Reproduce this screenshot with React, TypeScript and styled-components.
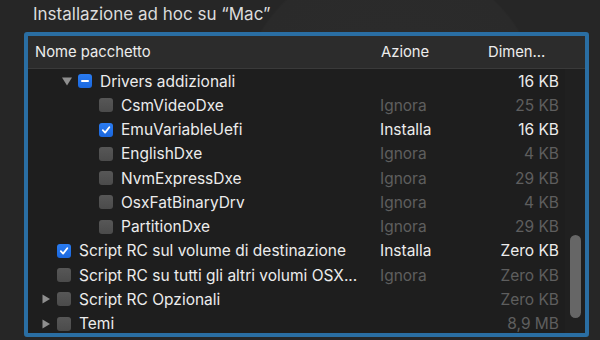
import styled, { createGlobalStyle, css } from 'styled-components';

const GlobalStyle = createGlobalStyle`
    html, body {
        margin: 0;
        padding: 0;
        width: 600px;
        height: 340px;
        overflow: hidden;
        background: #272727;
        font-family: Inter, "Liberation Sans", sans-serif;
        -webkit-font-smoothing: antialiased;
    }
`;

const Window = styled.div`
    width: 600px;
    height: 340px;
    box-sizing: border-box;
    padding: 3px 0 0 24px;
    background: radial-gradient(circle at 390px 110px, #2c2c2c 0, #2a2a2a 150px, #262626 152px, #262626 100%);
`;

const Title = styled.div`
    font-size: 17px;
    line-height: 22px;
    color: #dcdcdc;
    padding-left: 9px;
    margin-bottom: 7px;
`;

const Frame = styled.div`
    width: 565px;
    height: 305px;
    box-sizing: border-box;
    border: 4px solid #2a6ea3;
    border-radius: 3px;
    background: #1e1e1e;
    display: flex;
    flex-direction: column;
    overflow: hidden;
`;

const COLS = '347px 100px 90px 1fr';

const Header = styled.div`
    display: grid;
    grid-template-columns: ${COLS};
    height: 32px;
    flex: none;
    background: #2c2c2c;
    border-bottom: 1px solid #3a3a3a;
`;

const HeadCell = styled.div<{ $pad?: number }>`
    display: flex;
    align-items: center;
    padding-left: ${({ $pad }) => $pad ?? 7}px;
    font-size: 14.8px;
    color: #ececec;
    position: relative;
    & + &::before {
        content: '';
        position: absolute;
        left: 0;
        top: 4px;
        bottom: 5px;
        width: 1px;
        background: #3e3e3e;
    }
`;

const Body = styled.div`
    display: flex;
    flex: 1;
    min-height: 0;
`;

const List = styled.div`
    width: 537px;
    flex: none;
`;

const Track = styled.div`
    flex: 1;
    background: #202020;
    padding: 166px 0 0 5px;
`;

const Thumb = styled.div`
    width: 11px;
    height: 83px;
    border-radius: 6px;
    background: #666666;
`;

const Row = styled.div`
    display: grid;
    grid-template-columns: 347px 100px 90px;
    height: 24.25px;
    align-items: center;
    font-size: 15.5px;
    white-space: nowrap;
`;

const NameCell = styled.div<{ $level: number }>`
    display: flex;
    align-items: center;
    min-width: 0;
    padding-left: ${({ $level }) => 11 + $level * 21}px;
    padding-right: 14px;
    color: #ececec;
`;

const Disclosure = styled.div`
    width: 14px;
    height: 14px;
    margin-right: 4px;
    display: flex;
    align-items: center;
    justify-content: center;
    flex: none;
`;

const Box = styled.div<{ $on?: boolean }>`
    width: 14px;
    height: 14px;
    border-radius: 3px;
    flex: none;
    display: flex;
    align-items: center;
    justify-content: center;
    margin-right: 8px;
    background: linear-gradient(#575757, #4b4b4b);
    ${({ $on }) => $on && css`
        background: linear-gradient(#2a7cf2, #1a67de);
    `}
`;

const ActionCell = styled.div<{ $dim?: boolean }>`
    padding-left: 5px;
    color: ${({ $dim }) => ($dim ? '#5e5e5e' : '#ececec')};
`;

const SizeCell = styled.div<{ $dim?: boolean }>`
    text-align: right;
    padding-right: 6px;
    color: ${({ $dim }) => ($dim ? '#5e5e5e' : '#ececec')};
`;

type Item = {
    name: string;
    level: number;
    check: 'on' | 'off' | 'mixed';
    tri?: 'down' | 'right';
    action?: string;
    size: string;
    dim?: boolean;
};

// names as shown in the column (the long one is already truncated)
const items: Item[] = [
    { name: 'Drivers addizionali', level: 1, check: 'mixed', tri: 'down', size: '16 KB' },
    { name: 'CsmVideoDxe', level: 2, check: 'off', action: 'Ignora', size: '25 KB', dim: true },
    { name: 'EmuVariableUefi', level: 2, check: 'on', action: 'Installa', size: '16 KB' },
    { name: 'EnglishDxe', level: 2, check: 'off', action: 'Ignora', size: '4 KB', dim: true },
    { name: 'NvmExpressDxe', level: 2, check: 'off', action: 'Ignora', size: '29 KB', dim: true },
    { name: 'OsxFatBinaryDrv', level: 2, check: 'off', action: 'Ignora', size: '4 KB', dim: true },
    { name: 'PartitionDxe', level: 2, check: 'off', action: 'Ignora', size: '29 KB', dim: true },
    { name: 'Script RC sul volume di destinazione', level: 0, check: 'on', action: 'Installa', size: 'Zero KB' },
    { name: 'Script RC su tutti gli altri volumi OSX...', level: 0, check: 'off', action: 'Ignora', size: 'Zero KB', dim: true },
    { name: 'Script RC Opzionali', level: 0, check: 'off', tri: 'right', size: 'Zero KB', dim: true },
    { name: 'Temi', level: 0, check: 'off', tri: 'right', size: '8,9 MB', dim: true },
];

const Triangle = ({ dir }: { dir: 'down' | 'right' }) => (
    <svg width="12" height="12" viewBox="0 0 12 12">
        {dir === 'down'
            ? <path d="M1 2.5 L11 2.5 L6 10.5 Z" fill="#8f8f8f" />
            : <path d="M2.5 1.5 L10 6 L2.5 10.5 Z" fill="#8f8f8f" />}
    </svg>
);

const CheckMark = () => (
    <svg width="10" height="10" viewBox="0 0 10 10">
        <path d="M1.8 5.2 L4.1 7.6 L8.3 2.2" fill="none" stroke="#fff" strokeWidth="1.8" strokeLinecap="round" strokeLinejoin="round" />
    </svg>
);

const Dash = () => (
    <svg width="10" height="10" viewBox="0 0 10 10">
        <path d="M2 5 L8 5" stroke="#fff" strokeWidth="2" strokeLinecap="round" />
    </svg>
);

const App = () => {
    return (
        <Window>
            <GlobalStyle />
            <Title>Installazione ad hoc su “Mac”</Title>
            <Frame>
                <Header>
                    <HeadCell>Nome pacchetto</HeadCell>
                    <HeadCell $pad={6}>Azione</HeadCell>
                    <HeadCell $pad={13}>Dimen...</HeadCell>
                    <HeadCell />
                </Header>
                <Body>
                    <List>
                        {items.map((it) => (
                            <Row key={it.name}>
                                <NameCell $level={it.level}>
                                    <Disclosure>{it.tri && <Triangle dir={it.tri} />}</Disclosure>
                                    <Box $on={it.check !== 'off'}>
                                        {it.check === 'on' && <CheckMark />}
                                        {it.check === 'mixed' && <Dash />}
                                    </Box>
                                    <span>{it.name}</span>
                                </NameCell>
                                <ActionCell $dim={it.dim}>{it.action}</ActionCell>
                                <SizeCell $dim={it.dim}>{it.size}</SizeCell>
                            </Row>
                        ))}
                    </List>
                    <Track>
                        <Thumb />
                    </Track>
                </Body>
            </Frame>
        </Window>
    );
};

export default App;
